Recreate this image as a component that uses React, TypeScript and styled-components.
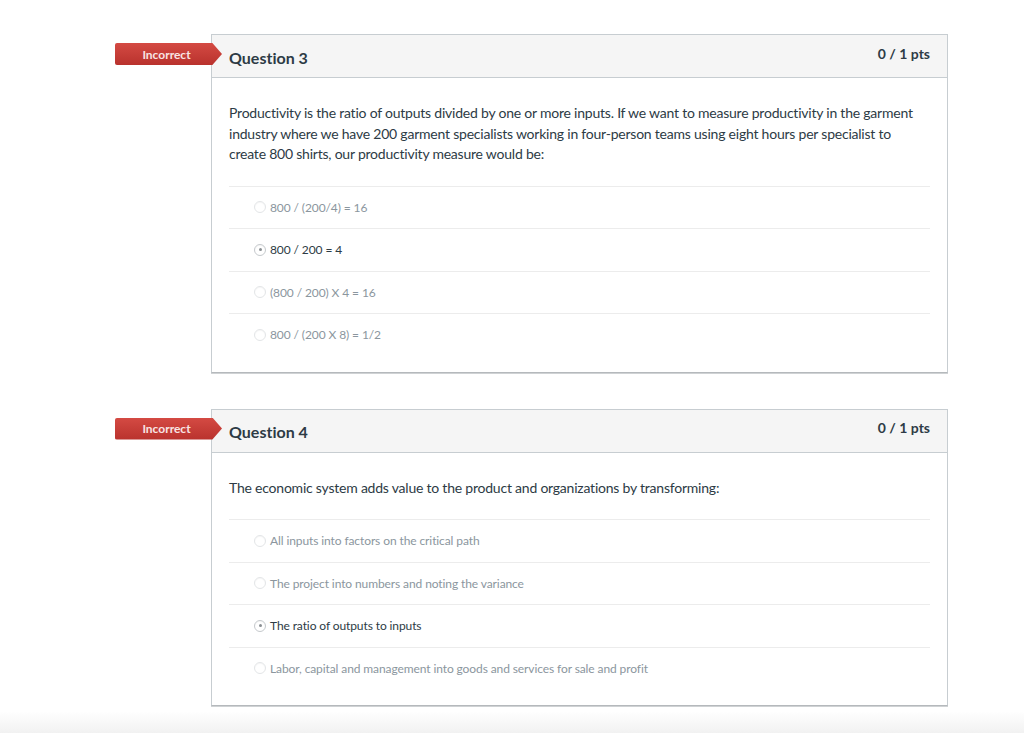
import React, { type FC } from 'react'
import styled, { createGlobalStyle } from 'styled-components'

interface Answer {
  text: string
  selected?: boolean
}

interface Question {
  title: string
  points: string
  text: string
  answers: Answer[]
}

const questions: Question[] = [
  {
    title: 'Question 3',
    points: '0 / 1 pts',
    text: 'Productivity is the ratio of outputs divided by one or more inputs. If we want to measure productivity in the garment industry where we have 200 garment specialists working in four-person teams using eight hours per specialist to create 800 shirts, our productivity measure would be:',
    answers: [
      { text: '800 / (200/4) = 16' },
      { text: '800 / 200 = 4', selected: true },
      { text: '(800 / 200) X 4 = 16' },
      { text: '800 / (200 X 8) = 1/2' }
    ]
  },
  {
    title: 'Question 4',
    points: '0 / 1 pts',
    text: 'The economic system adds value to the product and organizations by transforming:',
    answers: [
      { text: 'All inputs into factors on the critical path' },
      { text: 'The project into numbers and noting the variance' },
      { text: 'The ratio of outputs to inputs', selected: true },
      { text: 'Labor, capital and management into goods and services for sale and profit' }
    ]
  }
]

const GlobalStyle = createGlobalStyle`
  html, body {
    margin: 0;
    padding: 0;
    background: #fff;
  }
  body {
    font-family: Lato, "Open Sans", "Liberation Sans", sans-serif;
    font-variant-ligatures: none;
    color: #2d3b45;
  }
`

const QuestionBlock: FC<{ question: Question }> = ({ question }) => (
  <QuestionWrapper>
    <IncorrectBanner>Incorrect</IncorrectBanner>
    <Card>
      <Header>
        <Title>{question.title}</Title>
        <Points>{question.points}</Points>
      </Header>
      <Body>
        <QuestionText>{question.text}</QuestionText>
        <AnswerList>
          {question.answers.map((answer) => (
            <AnswerRow key={answer.text}>
              <Radio $selected={answer.selected} />
              <AnswerText $selected={answer.selected}>{answer.text}</AnswerText>
            </AnswerRow>
          ))}
        </AnswerList>
      </Body>
    </Card>
  </QuestionWrapper>
)

const App: FC = () => (
  <>
    <GlobalStyle />
    <Page>
      {questions.map((q) => <QuestionBlock key={q.title} question={q} />)}
    </Page>
    <BottomFade />
  </>
)

const Page = styled.main`
  display: flex;
  flex-direction: column;
  gap: 36px;
  padding: 34px 0 0 211px;
`

const QuestionWrapper = styled.section`
  position: relative;
  width: 737px;
`

const IncorrectBanner = styled.div`
  position: absolute;
  top: 9px;
  left: -96px;
  width: 107px;
  height: 22px;
  box-sizing: border-box;
  padding: 0 6px 0 2px;
  display: flex;
  align-items: center;
  justify-content: center;
  font-size: 12px;
  font-weight: 700;
  color: #f8e4e3;
  background: linear-gradient(#d44a43, #b9322d);
  border-radius: 2px 0 0 2px;
  clip-path: polygon(0 0, 91% 0, 100% 50%, 91% 100%, 0 100%);
  z-index: 1;
`

const Card = styled.div`
  border: 1px solid #c7cdd1;
  border-bottom-color: #b5b9bc;
  box-shadow: 0 1px 0 #cfd2d4;
  background: #fff;
`

const Header = styled.header`
  display: flex;
  justify-content: space-between;
  align-items: center;
  height: 42px;
  padding: 0 17px;
  background: #f5f5f5;
  border-bottom: 1px solid #c7cdd1;
`

const Title = styled.h2`
  margin: 2px 0 0;
  font-size: 16px;
  font-weight: 700;
  color: #2d3b45;
`

const Points = styled.span`
  margin-bottom: 6px;
  font-size: 14px;
  font-weight: 700;
  color: #2d3b45;
`

const Body = styled.div`
  padding: 25px 17px 16px;
`

const QuestionText = styled.p`
  margin: 0 0 21px;
  font-size: 14px;
  line-height: 20.5px;
  letter-spacing: -0.22px;
  color: #2d3b45;
`

const AnswerList = styled.ul`
  list-style: none;
  margin: 0;
  padding: 0;
`

const AnswerRow = styled.li`
  display: flex;
  align-items: center;
  height: 41.5px;
  padding-left: 25px;
  border-top: 1px solid #ececec;
`

const Radio = styled.span<{ $selected?: boolean }>`
  position: relative;
  width: 12px;
  height: 12px;
  box-sizing: border-box;
  margin-right: 4px;
  border-radius: 50%;
  border: 1px solid ${(p) => (p.$selected ? '#c5c9cc' : '#e3e5e7')};
  background: #fff;
  box-shadow: inset 0 1px 1px rgba(0, 0, 0, 0.04);

  &::after {
    content: '';
    display: ${(p) => (p.$selected ? 'block' : 'none')};
    position: absolute;
    top: 50%;
    left: 50%;
    width: 3px;
    height: 3px;
    margin: -1.5px 0 0 -1.5px;
    border-radius: 50%;
    background: #8a8f93;
  }
`

const AnswerText = styled.span<{ $selected?: boolean }>`
  font-size: 12px;
  letter-spacing: -0.1px;
  color: ${(p) => (p.$selected ? '#2d3b45' : '#8b969e')};
`

const BottomFade = styled.div`
  margin-top: 5px;
  height: 26px;
  background: linear-gradient(#ffffff, #efefef);
`

export default App
